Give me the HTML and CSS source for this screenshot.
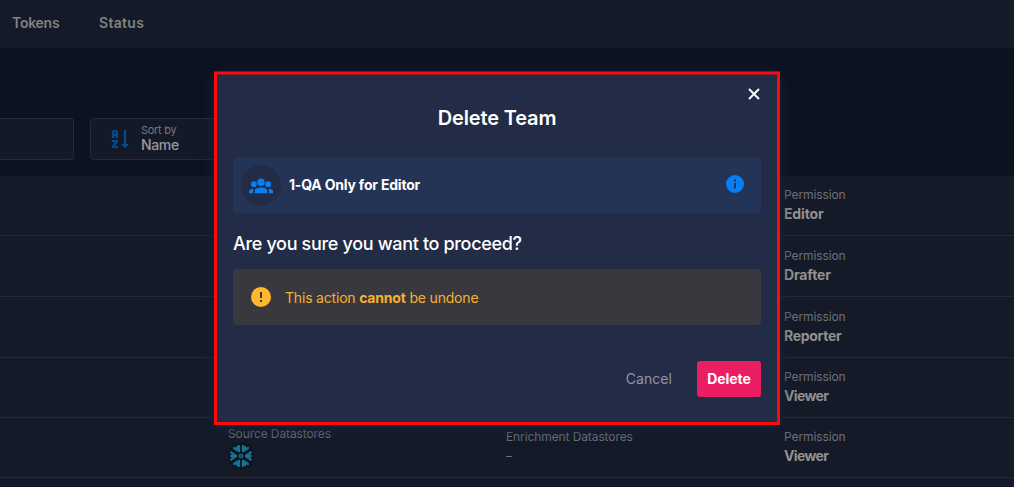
FILE: index.html
```html
<!DOCTYPE html>
<html lang="en">
<head>
<meta charset="utf-8">
<title>Delete Team</title>
<link rel="stylesheet" href="styles.css">
</head>
<body>
<nav class="nav"><span class="nav-tokens">Tokens</span><span class="nav-status">Status</span></nav>
<section class="toolbar">
  <div class="search"></div>
  <div class="sort">
    <svg class="sort-icon" width="18" height="20" viewBox="0 0 18 20" fill="none" stroke="#024b91" stroke-width="2.200"><path d="M2 9V3Q2 2 3 2H5Q6 2 6 3V9M2 6H6M1 12H7M1 18H7M6 12.500L2 17.500M14 1V16"/><path d="M10 15H18L14 19Z" fill="#024b91" stroke="none"/></svg>
    <div class="sort-text"><span class="sort-label">Sort by</span><span class="sort-value">Name</span></div>
  </div>
</section>
<main class="list">
  <div class="row"><div class="perm"><span class="label">Permission</span><b class="role editor">Editor</b></div></div>
  <div class="row"><div class="perm low"><span class="label">Permission</span><b class="role editor">Drafter</b></div></div>
  <div class="row"><div class="perm low"><span class="label">Permission</span><b class="role reporter">Reporter</b></div></div>
  <div class="row"><div class="perm"><span class="label">Permission</span><b class="role">Viewer</b></div></div>
  <div class="row">
    <div class="source"><span class="label">Source Datastores</span>
      <svg class="snow" width="26" height="26" viewBox="-13 -13 26 26"><circle r="13" fill="#0d1320"/><g fill="none" stroke="#17718f" stroke-width="2.300" stroke-linecap="round" stroke-linejoin="round"><path d="M-2 -10V-4.800L-7 -8M2 -10V-4.800L7 -8M-2 10V4.800L-7 8M2 10V4.800L7 8M-9.800 -3.500L-4.800 0L-9.800 3.500M9.800 -3.500L4.800 0L9.800 3.500M-9.800 0H-5M9.800 0H5M-4 -9L-2.500 -6M4 -9L2.500 -6M-4 9L-2.500 6M4 9L2.500 6"/></g><circle r="1.600" fill="none" stroke="#17718f" stroke-width="1.500"/></svg>
    </div>
    <div class="enrich"><span class="label">Enrichment Datastores</span><span class="dash">–</span></div>
    <div class="perm"><span class="label">Permission</span><b class="role">Viewer</b></div>
  </div>
</main>
<div class="dialog" role="dialog">
  <svg class="close" width="12" height="12" viewBox="0 0 12 12" fill="none" stroke="#fff" stroke-width="1.900"><path d="M1 1L11 11M11 1L1 11"/></svg>
  <h1 class="title">Delete Team</h1>
  <div class="team">
    <div class="avatar"><svg width="24" height="16" viewBox="0 0 24 16" fill="#087ff5"><circle cx="12" cy="4.300" r="3.700"/><circle cx="4.900" cy="6.200" r="2.900"/><circle cx="19.100" cy="6.200" r="2.900"/><path d="M5.800 15.200V13C5.800 10.600 8.800 9.600 12 9.600S18.200 10.600 18.200 13V15.200ZM0 15.200V13.500C0 11.500 2 10.900 4.700 10.700C4.100 11.500 4 12.300 4 13.200V15.200ZM24 15.200V13.500C24 11.500 22 10.900 19.300 10.700C19.900 11.500 20 12.300 20 13.200V15.200Z"/></svg></div>
    <span class="team-name">1-QA Only for Editor</span>
    <svg class="info" width="18" height="18" viewBox="0 0 18 18"><circle cx="9" cy="9" r="9" fill="#087ff5"/><path d="M8 4.500H10V6.500H8ZM8 8H10V13.500H8Z" fill="#243456"/></svg>
  </div>
  <h2 class="question">Are you sure you want to proceed?</h2>
  <div class="warning">
    <svg width="20" height="20" viewBox="0 0 20 20"><circle cx="10" cy="10" r="10" fill="#ffb82e"/><path d="M9 5H11V11H9ZM9 13H11V15H9Z" fill="#3a383f"/></svg>
    <span class="warning-text">This action <b>cannot</b> be undone</span>
  </div>
  <div class="actions"><span class="cancel">Cancel</span><button class="delete">Delete</button></div>
</div>
</body>
</html>
```
FILE: styles.css
```css
* { box-sizing: border-box; }
body { margin: 0; width: 1014px; height: 487px; overflow: hidden; background: #0d1220; color: #92918f; font-family: Inter, sans-serif; }
span, b { white-space: nowrap; }
.nav { height: 48px; background: #151a29; display: flex; align-items: center; gap: 40px; padding: 0 12px 3px; font-size: 14px; font-weight: 600; color: #828282; }
.nav-tokens { width: 47px; letter-spacing: -.25px; }
.nav-status { letter-spacing: .3px; }
.toolbar { height: 128px; padding-top: 70px; display: flex; gap: 16px; }
.search { width: 74px; height: 42px; border: 1px solid #252a37; border-left: 0; border-radius: 0 4px 4px 0; background: #141927; }
.sort { width: 200px; height: 42px; border: 1px solid #252a37; border-radius: 4px; background: #141927; display: flex; padding-left: 20px; align-items: center; gap: 12px; }
.sort-text { display: flex; flex-direction: column; line-height: 15px; padding-bottom: 3px; }
.sort-label { font-size: 11px; letter-spacing: -.3px; color: #797979; }
.sort-value { margin-top: -1px; font-size: 14px; font-weight: 500; letter-spacing: -.35px; color: #999; }
.list { background: #151a29; display: grid; grid-template-rows: 60px 61px 61px 60px 60px 9px; }
.row { border-bottom: 1px solid #252a37; display: grid; grid-template-columns: 228px 278px 278px 1fr; }
.perm { grid-column: 4; padding-top: 11px; display: flex; flex-direction: column; }
.perm.low { padding-top: 12px; }
.label { font-size: 12px; line-height: 16px; letter-spacing: -.1px; color: #6d7079; }
.role { font-size: 14px; line-height: 22px; font-weight: 700; letter-spacing: -.65px; }
.editor { letter-spacing: -.15px; }
.reporter { letter-spacing: -.3px; }
.source { grid-column: 2; padding-top: 8px; display: flex; flex-direction: column; }
.snow { margin-top: 1px; }
.enrich { padding-top: 11px; display: flex; flex-direction: column; }
.dash { font-size: 12px; line-height: 22px; color: #6d7079; }
.dialog { position: absolute; left: 214px; top: 72px; width: 566px; height: 353px; border: 3px solid #fb0b0d; border-top-width: 2px; background: #232c46; box-shadow: inset 0 1px #8b1a2b, 0 -1px #8b1018, 0 4px 12px #172339; padding: 15px 16px 0; display: flex; flex-direction: column; }
.close { align-self: flex-end; margin-top: -1px; margin-right: 1px; }
.title { margin: 3px 0 0; text-align: center; font-size: 20px; line-height: 30px; font-weight: 600; color: #fff; letter-spacing: -.15px; }
.team { height: 56px; margin-top: 24px; border-radius: 4px; background: #243456; display: flex; align-items: center; padding: 0 17px 0 8px; }
.avatar { width: 40px; height: 40px; border-radius: 50%; background: #232c46; display: grid; place-items: center; padding-top: 1px; }
.team-name { margin-left: 8px; padding-bottom: 2px; font-size: 14px; font-weight: 700; color: #fff; letter-spacing: -.2px; }
.info { margin-left: auto; margin-top: -2px; }
.question { margin: 18px 0 0; font-size: 18px; line-height: 26px; font-weight: 500; color: #fff; letter-spacing: -.33px; }
.warning { height: 56px; margin-top: 12px; border-radius: 4px; background: #3a383f; display: flex; align-items: center; gap: 14px; padding-left: 18px; font-size: 14px; color: #f6b132; letter-spacing: -.19px; }
.actions { margin-top: 36px; display: flex; justify-content: flex-end; align-items: center; gap: 25px; }
.cancel { font-size: 14px; padding-bottom: 2px; color: #9394a0; letter-spacing: .05px; }
.delete { width: 64px; height: 36px; border: 0; border-radius: 3px; padding: 0 0 2px; background: #eb1e63; color: #fff; font: 700 14px Inter, sans-serif; letter-spacing: -.1px; }
```
